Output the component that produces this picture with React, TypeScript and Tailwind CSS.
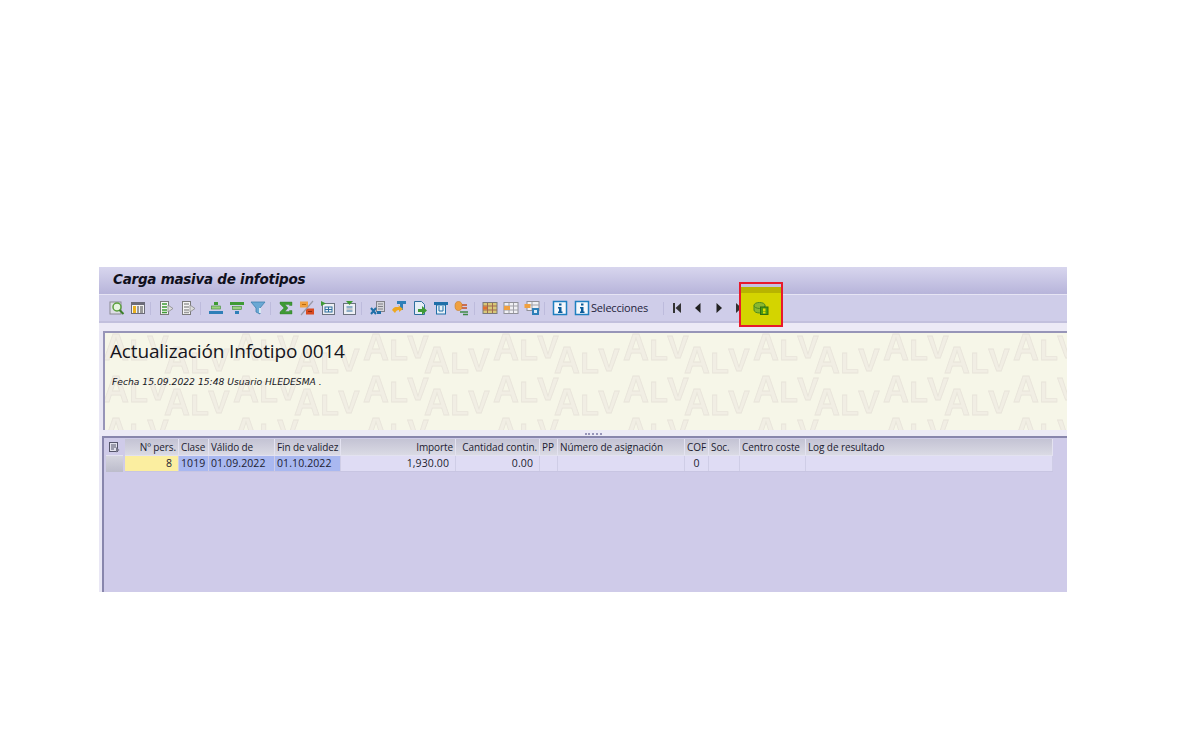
import React from "react";

const Sep = () => <div className="w-px h-[13px] bg-[#bdbbdc] mx-[4px]" />;

function Ic({ children, w = 16 }: { children: React.ReactNode; w?: number }) {
  return (
    <svg width={w} height="16" viewBox="0 0 16 16" className="shrink-0">
      {children}
    </svg>
  );
}

const I = {
  search: (
    <Ic>
      <rect x="1" y="2" width="11" height="12" fill="#dedee6" stroke="#8a8a92" />
      <circle cx="8" cy="7" r="4" fill="#e8f5e0" stroke="#5aa03c" strokeWidth="1.5" />
      <path d="M10.5 10l4 4" stroke="#3c7f2a" strokeWidth="2" />
    </Ic>
  ),
  cols: (
    <Ic>
      <rect x="1.5" y="2.5" width="13" height="11" fill="#f2f2f2" stroke="#6b6b78" />
      <rect x="2" y="3" width="12" height="2" fill="#6b6b78" />
      <rect x="3" y="6" width="3" height="7" fill="#e8b020" />
      <rect x="7" y="6" width="2" height="7" fill="#9a9a9a" />
      <rect x="10" y="6" width="3" height="7" fill="#9a9a9a" />
    </Ic>
  ),
  doc1: (
    <Ic>
      <rect x="2.5" y="1.5" width="8" height="13" fill="#f5f5f5" stroke="#7a7a7a" />
      <path d="M4 4h5M4 7h5M4 10h5M4 12.5h5" stroke="#3f9a35" strokeWidth="1.5" />
      <path d="M10 5l5 3.5-5 3.5z" fill="#dcdcdc" stroke="#808080" strokeWidth=".7" />
    </Ic>
  ),
  doc2: (
    <Ic>
      <rect x="2.5" y="1.5" width="8" height="13" fill="#f5f5f5" stroke="#7a7a7a" />
      <path d="M4 4h5M4 7h5M4 10h5M4 12.5h5" stroke="#9a9a9a" strokeWidth="1.5" />
      <path d="M10 5l5 3.5-5 3.5z" fill="#dcdcdc" stroke="#808080" strokeWidth=".7" />
    </Ic>
  ),
  up: (
    <Ic>
      <rect x="6" y="2" width="4" height="3" fill="#3f9a35" />
      <rect x="3.5" y="6" width="9" height="3" fill="#9ad080" stroke="#3f8a35" strokeWidth=".6" />
      <rect x="1" y="11" width="14" height="3" fill="#2e7fb8" />
    </Ic>
  ),
  down: (
    <Ic>
      <rect x="1" y="2" width="14" height="3" fill="#3f9a35" />
      <rect x="3.5" y="6.5" width="9" height="3" fill="#9ad080" stroke="#3f8a35" strokeWidth=".6" />
      <rect x="6" y="11" width="4" height="3" fill="#2e7fb8" />
    </Ic>
  ),
  filter: (
    <Ic>
      <path d="M1 2h14l-5 6v6l-4-2V8z" fill="#6aa8d4" stroke="#3f80ae" strokeWidth=".8" />
      <path d="M9 8h2v5H9z" fill="#d8e8f2" />
    </Ic>
  ),
  sigma: (
    <Ic>
      <path d="M2 2h12v3.5h-2.500V4.500H7l3 3.500-3 3.500h4.500v-1H14V14H2v-2l4-4-4-4z" fill="#3f9a35" stroke="#2f7a28" strokeWidth=".4" />
    </Ic>
  ),
  sub: (
    <Ic>
      <rect x="1" y="1.500" width="8" height="6" fill="#f0a040" />
      <path d="M3 4.500h4" stroke="#b86a10" />
      <rect x="7" y="8.500" width="8" height="6" fill="#d84a20" />
      <path d="M9 11.500h4" stroke="#8a2a10" />
      <path d="M14 1L2 15" stroke="#9a9aa8" strokeWidth="1.200" />
    </Ic>
  ),
  expand: (
    <Ic>
      <rect x="2.500" y="3.500" width="12" height="11" fill="#eef0f4" stroke="#6b7280" />
      <path d="M1 1l5 2.500L1 6z" fill="#3f9a35" />
      <rect x="5" y="7" width="7" height="5" fill="none" stroke="#2f6f9f" />
      <path d="M8.500 7v5M5 9.500h7" stroke="#2f6f9f" />
    </Ic>
  ),
  collapse: (
    <Ic>
      <rect x="2.500" y="3.500" width="12" height="11" fill="#eef0f4" stroke="#6b7280" />
      <path d="M5 1h7L8.500 5z" fill="#3f9a35" />
      <path d="M5.500 7h6M5.500 11h6" stroke="#2f6f9f" />
      <path d="M5.500 9h6" stroke="#9aa0a8" />
    </Ic>
  ),
  xls: (
    <Ic>
      <rect x="6.500" y="1.500" width="8" height="10" fill="#d5d5da" stroke="#808088" />
      <path d="M8 4h5M8 6.500h5M8 9h5" stroke="#808088" />
      <path d="M1 8l5 6M6 8l-5 6" stroke="#1f6fa8" strokeWidth="2" />
      <rect x="7" y="11" width="4" height="3" fill="#1f6fa8" />
    </Ic>
  ),
  word: (
    <Ic>
      <rect x="6" y="1" width="9" height="3" fill="#2e7fb8" />
      <rect x="9" y="4" width="3" height="6" fill="#2e7fb8" />
      <path d="M1 10c2-4 5-3 7-3l-1-2 5 4-4 3v-2c-2 0-3 1-4 3z" fill="#eea820" />
    </Ic>
  ),
  save: (
    <Ic>
      <path d="M2.500 1.500h7l3 3v10h-10z" fill="#e6eef6" stroke="#2f6f9f" />
      <path d="M6 9h4V6l5 4.500-5 4.500v-3H6z" fill="#3f9a35" />
    </Ic>
  ),
  print: (
    <Ic>
      <rect x="1" y="2" width="14" height="3" fill="#1f6fa8" />
      <rect x="3.500" y="5" width="9" height="9" fill="#e8f0f6" stroke="#1f6fa8" />
      <path d="M6 6v5h4V6" fill="none" stroke="#1f6fa8" />
    </Ic>
  ),
  abc: (
    <Ic>
      <ellipse cx="4.500" cy="6" rx="3.500" ry="4.500" fill="#f0a040" stroke="#c87a20" strokeWidth=".6" />
      <path d="M8 5h5M8 8h5" stroke="#c8501f" strokeWidth="1.500" />
      <path d="M6 12h8M9 14.500h5" stroke="#3f8a45" strokeWidth="1.500" />
    </Ic>
  ),
  grid1: (
    <Ic>
      <rect x="1" y="2.500" width="14" height="11" fill="#d8c878" stroke="#7a7a7a" />
      <path d="M1 6h14M1 10h14M5.500 3v10M10.500 3v10" stroke="#a06a50" />
      <rect x="1" y="6.500" width="4" height="3" fill="#e07030" />
    </Ic>
  ),
  grid2: (
    <Ic>
      <rect x="1" y="2.500" width="14" height="11" fill="#f0f0f4" stroke="#909098" />
      <path d="M1 6h14M1 10h14M6 3v10M10.500 3v10" stroke="#a0a0a8" />
      <rect x="1" y="6" width="6" height="4" fill="#f0a040" />
    </Ic>
  ),
  grid3: (
    <Ic>
      <rect x="3" y="1.500" width="12" height="9" fill="#f0f0f4" stroke="#909098" />
      <path d="M3 5h12M8 2v8" stroke="#a0a0a8" />
      <rect x="0.500" y="4" width="6" height="4" fill="#f0a040" />
      <rect x="8" y="8" width="7" height="7" fill="#2e7fb8" />
      <rect x="10" y="10" width="3" height="3" fill="#dcebf5" />
    </Ic>
  ),
  info: (
    <Ic>
      <rect x="1.500" y="1.500" width="13" height="13" fill="#f5f8fc" stroke="#1f7fc0" strokeWidth="1.500" />
      <rect x="7" y="3.500" width="2.500" height="2" fill="#0b5c9a" />
      <path d="M6 7h3.500v4.500h1V13H6v-1.500h1V8.500H6z" fill="#0b5c9a" />
    </Ic>
  ),
  first: (
    <Ic>
      <path d="M4 3h2v10H4zM12 3v10L6.500 8z" fill="#333" />
    </Ic>
  ),
  prev: (
    <Ic>
      <path d="M10.500 3v10L5 8z" fill="#222" />
    </Ic>
  ),
  next: (
    <Ic>
      <path d="M5.500 3v10L11 8z" fill="#222" />
    </Ic>
  ),
  last: (
    <Ic>
      <path d="M4 3v10L9.500 8zM10 3h2v10h-2z" fill="#333" />
    </Ic>
  ),
  box: (
    <Ic>
      <path d="M1 5.500c0-2 2.500-3 5.500-3s5.500 1 5.500 3v4.500c0 1.500-2 3-5.500 3S1 11.500 1 10z" fill="#8ab830" stroke="#4c8a20" />
      <path d="M1 5.500c0 1.500 2.500 3 5.500 3s5.500-1.500 5.500-3" fill="none" stroke="#4c8a20" />
      <rect x="7.500" y="7" width="7.500" height="7.500" fill="#4a9a10" stroke="#2f6f10" />
      <rect x="10" y="8.500" width="2.500" height="3" fill="#e4e000" />
      <rect x="10" y="12" width="2.500" height="1.500" fill="#e4e000" />
    </Ic>
  ),
};

const cols = [
  { l: "Nº pers.", w: 54, right: true, v: "8", bg: "bg-[#fbeea0]" },
  { l: "Clase", w: 30, v: "1019", bg: "bg-[#a9b8f0]" },
  { l: "Válido de", w: 66, v: "01.09.2022", bg: "bg-[#a9b8f0]" },
  { l: "Fin de validez", w: 66, v: "01.10.2022", bg: "bg-[#a9b8f0]" },
  { l: "Importe", w: 115, right: true, v: "1,930.00" },
  { l: "Cantidad contin.", w: 84, right: true, v: "0.00" },
  { l: "PP", w: 18, v: "" },
  { l: "Número de asignación", w: 127, v: "" },
  { l: "COF", w: 24, center: true, v: "0" },
  { l: "Soc.", w: 31, v: "" },
  { l: "Centro coste", w: 66, v: "" },
  { l: "Log de resultado", w: 247, v: "" },
];

const Alv = ({ x, y }: { x: number; y: number }) => (
  <text x={x} y={y} letterSpacing="-0.5">
    <tspan fontSize="36">A</tspan>
    <tspan fontSize="30" dx="1">L</tspan>
    <tspan fontSize="32" dy="-2">V</tspan>
  </text>
);

export default function App() {
  return (
    <div className="w-[1200px] h-[750px] bg-white pt-[267px] pl-[99px] font-['Liberation_Sans',sans-serif] text-[#1c1c30] overflow-hidden">
      <div className="w-[968px] h-[325px] flex flex-col bg-[#e9e7f5]">
        <div className="h-[27px] shrink-0 bg-gradient-to-b from-[#d8d6ee] to-[#b7b4da] pl-[14px] pb-[2px] flex items-center">
          <span className="text-[13.500px] font-bold italic text-[#10101c] font-['DejaVu_Sans',sans-serif] leading-none tracking-[-0.25px]">
            Carga masiva de infotipos
          </span>
        </div>
        <div className="h-[29px] shrink-0 bg-[#cfcde9] border-t border-[#e6e4f4] border-b-2 border-b-[#c2c0dd] pl-[10px] flex items-center">
          <div className="flex items-center gap-[5px]">
            {I.search}
            {I.cols}
          </div>
          <Sep />
          <div className="flex items-center gap-[6px] ml-[3px]">
            {I.doc1}
            {I.doc2}
          </div>
          <Sep />
          <div className="flex items-center gap-[5px] ml-[3px]">
            {I.up}
            {I.down}
            {I.filter}
          </div>
          <Sep />
          <div className="flex items-center gap-[5px] ml-[3px]">
            {I.sigma}
            {I.sub}
            {I.expand}
            {I.collapse}
          </div>
          <Sep />
          <div className="flex items-center gap-[5px] ml-[4px]">
            {I.xls}
            {I.word}
            {I.save}
            {I.print}
            {I.abc}
          </div>
          <Sep />
          <div className="flex items-center gap-[5px] ml-[3px]">
            {I.grid1}
            {I.grid2}
            {I.grid3}
          </div>
          <Sep />
          <div className="flex items-center ml-[3px] gap-[6px]">
            {I.info}
            <div className="flex items-center gap-[1px]">
              {I.info}
              <span className="text-[11px] text-[#24243c] font-['Open_Sans',sans-serif] tracking-[-0.2px]">
                Selecciones
              </span>
            </div>
          </div>
          <div className="w-px h-[13px] bg-[#bdbbdc] ml-[15px] mr-[5px]" />
          <div className="flex items-center gap-[5px]">
            {I.first}
            {I.prev}
            {I.next}
            {I.last}
          </div>
          <div className="relative ml-[5px] w-[16px] h-[16px] z-10">
            <div className="absolute left-[-14px] top-[-18px] w-[44px] h-[45px] border-2 border-[#e8192c] bg-[#d4d400] flex flex-col">
              <div className="h-[3px] bg-[#c4c2e0]" />
              <div className="h-[6px] bg-[#b8b400]" />
            </div>
            <div className="relative">{I.box}</div>
          </div>
        </div>

        <div className="h-[8px] shrink-0 bg-[#eceaf6]" />

        <div className="relative h-[99px] shrink-0 ml-[4px] bg-[#f6f6e8] border-t-2 border-l-2 border-[#9795b8] overflow-hidden px-[5px]">
          <svg className="absolute left-0 top-0" width="964" height="99">
            <defs>
              <pattern id="alv" width="130" height="42" patternUnits="userSpaceOnUse" x="-2" y="0">
                <g
                  fontFamily="'Liberation Sans',sans-serif"
                  fontWeight="700"
                  fill="#f1eee4"
                  stroke="#e8e4da"
                  strokeWidth=".8"
                >
                  <Alv x={0} y={27} />
                  <Alv x={61} y={40} />
                </g>
              </pattern>
            </defs>
            <rect width="964" height="99" fill="url(#alv)" />
          </svg>
          <div className="relative pt-[5px] text-[19px] leading-[27px] text-[#15151c] font-['Open_Sans',sans-serif] tracking-[-0.15px]">
            Actualización Infotipo 0014
          </div>
          <div className="relative mt-[11px] ml-[2px] text-[9.200px] leading-[12px] italic text-[#15151c] font-['DejaVu_Sans',sans-serif]">
            Fecha 15.09.2022 15:48 Usuario HLEDESMA .
          </div>
        </div>

        <div className="h-[6px] shrink-0 flex justify-center items-end pb-[1px] bg-[#eceaf6]">
          <div className="w-[17px] h-[2px] ml-[20px] border-t-2 border-dotted border-[#9795b8]" />
        </div>

        <div className="flex-1 ml-[3px] bg-[#cfcbe9] border-t-2 border-l-2 border-[#8886ac] min-h-0 font-['Open_Sans',sans-serif] text-[10px] tracking-[-0.1px]">
          <div className="pt-[1px] pl-[2px] flex">
            <div className="w-[19px] shrink-0 pr-[2px]">
              <div className="h-[16px] flex items-center justify-center">
                <svg width="11" height="11" viewBox="0 0 11 11">
                  <rect x=".5" y=".5" width="8" height="9" fill="#e2e2ec" stroke="#55556a" />
                  <path d="M2 3h5M2 5h5M2 7h3" stroke="#55556a" />
                  <path d="M7 5l3.500 3-3.500 2.500z" fill="#77778a" />
                </svg>
              </div>
              <div className="h-[17px] bg-gradient-to-b from-[#d4d4de] to-[#bcbccb] border-t border-[#e3e2f0]" />
            </div>
            <div>
              <div className="flex h-[16px] bg-gradient-to-b from-[#c4c3d4] to-[#dadae4]">
                {cols.map((c) => (
                  <div
                    key={c.l}
                    style={{ width: c.w }}
                    className={`shrink-0 whitespace-nowrap overflow-hidden px-[2px] leading-[16px] border-r border-[#e3e2f0] ${c.right ? "text-right" : c.center ? "text-center" : "text-left"}`}
                  >
                    {c.l}
                  </div>
                ))}
              </div>
              <div className="flex h-[17px] bg-[#dfdcf4] border-t border-[#e3e2f0] border-b border-b-[#c8c5e2]">
                {cols.map((c) => (
                  <div
                    key={c.l}
                    style={{ width: c.w }}
                    className={`shrink-0 whitespace-nowrap leading-[15px] border-r border-[#cfcde6] text-[10.500px] tracking-[0.1px] ${c.bg ?? ""} ${c.right ? "text-right pr-[6px]" : c.center ? "text-center" : "pl-[2px]"}`}
                  >
                    {c.v}
                  </div>
                ))}
              </div>
            </div>
          </div>
        </div>
      </div>
    </div>
  );
}
